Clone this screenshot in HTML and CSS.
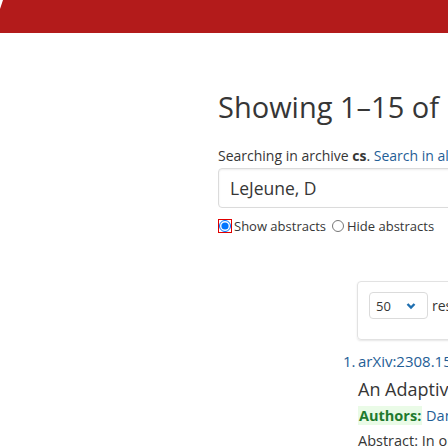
FILE: index.html
```html
<!DOCTYPE html>
<html lang="en">
<head>
<meta charset="utf-8">
<title>Search | arXiv e-print repository</title>
<link rel="stylesheet" href="styles.css">
</head>
<body>
<header class="topbar">
  <svg class="logo-edge" width="6" height="12" viewBox="0 0 6 12"><polygon points="0,0 3,0 0,9" fill="#ffffff"/></svg>
</header>
<main class="content">
  <h1 class="title">Showing 1–15 of 15 results for author: LeJeune, D</h1>
  <div class="archive-note">Searching in archive <strong>cs</strong>. <a href="#">Search in all archives.</a></div>
  <div class="search-field">
    <span class="search-value">LeJeune, D</span>
  </div>
  <div class="radios">
    <label class="radio"><input type="radio" name="abs" class="radio-input focused" checked>Show abstracts</label>
    <label class="radio"><input type="radio" name="abs" class="radio-input">Hide abstracts</label>
  </div>
  <div class="per-page-row">
    <div class="box">
      <div class="select">50 <svg class="chev" width="10" height="8" viewBox="0 0 10 8"><path d="M1.5 2 L5 5.5 L8.5 2" fill="none" stroke="#1f6fb0" stroke-width="2.4"/></svg></div>
      <span class="per-page-text">results per page.</span>
    </div>
  </div>
  <ol class="results">
    <li class="result">
      <p class="list-title"><a href="#">arXiv:2308.15074</a></p>
      <p class="paper-title">An Adaptive Tangent Feature Perspective of Neural Networks</p>
      <p class="authors"><span class="label">Authors:</span> <a href="#">Daniel LeJeune</a>, <a href="#">Sina Alemohammad</a></p>
      <p class="abstract"><span class="abs-label">Abstract</span>: In order to better understand feature learning in neural networks</p>
    </li>
  </ol>
</main>
</body>
</html>
```
FILE: styles.css
```css
html, body {
  margin: 0;
  padding: 0;
  background: #ffffff;
  overflow: hidden;
  width: 448px;
  height: 448px;
}
body {
  font-family: "Open Sans", "Noto Sans", sans-serif;
  color: #363636;
}
.topbar {
  height: 33px;
  background: #b31b1b;
  position: relative;
}
.logo-edge {
  position: absolute;
  left: 0;
  top: 0;
}
.content {
  padding: 56px 0 0 218px;
  width: 900px;
}
.title {
  margin: 0;
  font-size: 29px;
  font-weight: 400;
  line-height: 36px;
  white-space: nowrap;
  color: #363636;
}
.archive-note {
  margin-top: 21px;
  font-size: 14px;
  line-height: 20px;
  white-space: nowrap;
}
.archive-note a { color: #1f5e96; text-decoration: none; }
.archive-note strong { font-weight: 700; }
.search-field {
  margin-top: 2px;
  width: 500px;
  height: 40px;
  box-sizing: border-box;
  border: 1px solid #dbdbdb;
  border-radius: 4px;
  box-shadow: inset 0 1px 2px rgba(10,10,10,0.08);
  display: flex;
  align-items: center;
  padding-left: 11px;
  font-size: 17.5px;
}
.radios {
  margin-top: 9px;
  height: 18px;
  display: flex;
  align-items: center;
  font-size: 13px;
  line-height: 18px;
  white-space: nowrap;
}
.radio {
  display: flex;
  align-items: center;
  margin-right: 5px;
}
.radio-input {
  width: 12px;
  height: 12px;
  margin: 0 3px 0 1px;
}
.radio-input.focused {
  outline: 1px solid #e00000;
  outline-offset: 0;
}
.per-page-row {
  margin-top: 46px;
  padding-left: 139px;
}
.box {
  width: 300px;
  height: 59px;
  border: 1px solid #e2e2e2;
  border-radius: 4px;
  box-shadow: 0 1px 2px rgba(10,10,10,0.1);
  display: flex;
  align-items: flex-start;
  padding: 10px 0 0 11px;
  box-sizing: border-box;
}
.select {
  width: 59px;
  height: 27px;
  border: 1px solid #dbdbdb;
  border-radius: 4px;
  box-sizing: border-box;
  display: flex;
  align-items: center;
  padding-left: 6px;
  font-size: 13px;
  color: #363636;
  position: relative;
}
.chev {
  position: absolute;
  left: 36px;
  top: 9px;
}
.per-page-text {
  margin-left: 4px;
  font-size: 14px;
  line-height: 27px;
}
.results {
  margin: 11px 0 0 0;
  padding-left: 140px;
  list-style: none;
}
.result { position: relative; }
.result::before {
  content: "1.";
  position: absolute;
  left: -15px;
  top: 0;
  font-size: 15px;
  line-height: 20px;
  color: #1f5e96;
}
.result p { margin: 0; white-space: nowrap; }
.list-title { font-size: 15px; line-height: 20px; }
.list-title a { color: #1f5e96; text-decoration: none; }
.paper-title { margin-top: 6px !important; font-size: 18px; line-height: 24px; color: #363636; }
.authors { margin-top: 5px !important; font-size: 14.5px; line-height: 20px; }
.authors .label { font-weight: 700; color: #1f7a2e; background: #eafbe7; padding: 0 1px; }
.authors a { color: #1f5e96; text-decoration: none; }
.abstract { margin-top: 5px !important; font-size: 14.5px; line-height: 20px; color: #363636; }
```
